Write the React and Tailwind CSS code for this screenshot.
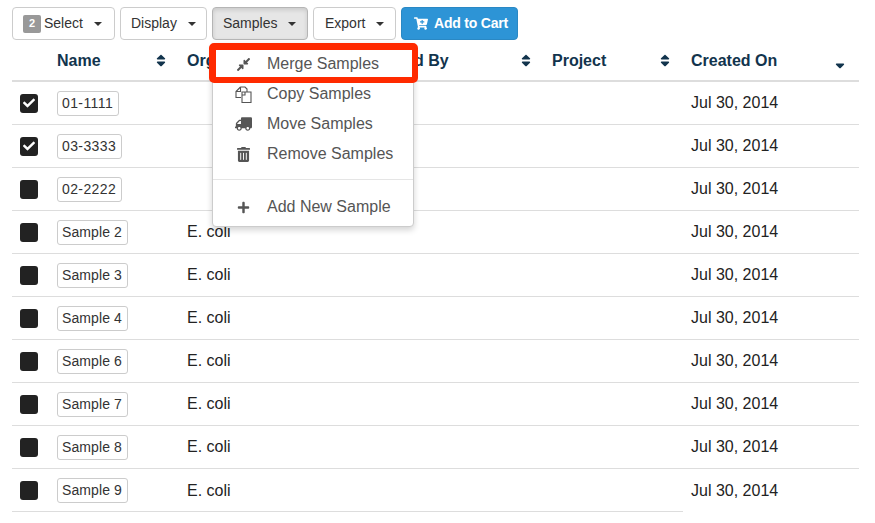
import React from "react";
import { FaCartPlus, FaCheck, FaCompressAlt, FaPlus, FaSort, FaSortDown, FaTruck, FaTrashAlt } from "react-icons/fa";

function Caret() {
  return <span className="ml-[11px] inline-block h-0 w-0 border-x-[4px] border-t-[4px] border-x-transparent border-t-[#333]" />;
}

function ToolButton({ children, className = "" }) {
  return (
    <button className={`flex h-[33px] items-center rounded-[4px] border text-[14px] text-[#333] ${className}`}>
      {children}
    </button>
  );
}

function Head({ w, children, sort = true, down = false, pr = "pr-[21px]" }) {
  return (
    <div className={`flex items-center justify-between ${pr} ${w}`}>
      <span className="text-[16px] font-bold text-[#12344d]">{children}</span>
      {sort && (down ? <FaSortDown className="mt-[3px] h-[15px] w-[10px] text-[#12344d]" /> : <FaSort className="h-[15px] w-[10px] text-[#12344d]" />)}
    </div>
  );
}

function Row({ name, org, checked, last, numeric }) {
  return (
    <div className={`flex h-[43px] items-center ${last ? "relative" : "border-b border-[#ddd]"}`}>
      <div className="w-[45px] pl-[8px]">
        <div className="flex h-[19px] w-[18px] items-center justify-center rounded-[3px] bg-[#222]">
          {checked && <FaCheck className="h-[12px] w-[12px] text-white" />}
        </div>
      </div>
      <div className="w-[130px]">
        <span className={`inline-block h-[25px] rounded-[3px] border border-[#ccc] pl-[4px] pr-[5px] text-[14px] leading-[23px] text-[#333] ${numeric ? "tracking-[0.4px]" : "tracking-[0.1px]"}`}>{name}</span>
      </div>
      <div className="w-[504px] text-[16px] text-[#222]">{org}</div>
      <div className="text-[16px] text-[#222]">Jul 30, 2014</div>
      {last && <div className="absolute bottom-0 left-0 h-px w-[671px] bg-[#ddd]" />}
    </div>
  );
}

const rows = [
  ["01-1111", "", true, true],
  ["03-3333", "", true, true],
  ["02-2222", "", false, true],
  ["Sample 2", "E. coli", false],
  ["Sample 3", "E. coli", false],
  ["Sample 4", "E. coli", false],
  ["Sample 6", "E. coli", false],
  ["Sample 7", "E. coli", false],
  ["Sample 8", "E. coli", false],
  ["Sample 9", "E. coli", false],
];

function CopyIcon() {
  return (
    <svg width="17" height="17" viewBox="0 0 17 17" fill="none" stroke="#555" strokeWidth="1.1">
      <path d="M5.5 1h4.5l2 2v3M5.5 1L1 5.5v6h5" />
      <path d="M1 5.5h4.5V1" />
      <path d="M7 6h9v10.5H7z" />
      <path d="M10 6v3H7" />
    </svg>
  );
}

function MenuItem({ icon, children }) {
  return (
    <div className="flex h-[30px] items-center text-[16px] text-[#555]">
      <span className="flex w-[54px] justify-center pl-[6px]">{icon}</span>
      <span>{children}</span>
    </div>
  );
}

export default function App() {
  return (
    <div className="relative h-[523px] w-[875px] overflow-hidden bg-white pl-[12px] pr-[16px] pt-[7px]" style={{ fontFamily: '"Liberation Sans", Arial, sans-serif' }}>
      <div className="flex gap-[5px]">
        <ToolButton className="w-[103px] border-[#ccc] bg-white pl-[10px]">
          <span className="mr-[3px] flex h-[18px] w-[18px] items-center justify-center rounded-[2px] bg-[#999] text-[11px] font-bold text-white">2</span>
          Select
          <Caret />
        </ToolButton>
        <ToolButton className="w-[87px] border-[#ccc] bg-white pl-[10px]">Display<Caret /></ToolButton>
        <ToolButton className="w-[96px] border-[#b5b5b5] bg-[#e6e6e6] pl-[10px] shadow-[inset_0_2px_4px_rgba(0,0,0,0.125)]">Samples<Caret /></ToolButton>
        <ToolButton className="w-[83px] border-[#ccc] bg-white pl-[11px]">Export<Caret /></ToolButton>
        <button className="flex h-[33px] w-[117px] items-center justify-center gap-[6px] rounded-[4px] border border-[#2a88c4] bg-[#2d94d6] pl-[3px] text-[14px] font-bold tracking-[-0.2px] text-white">
          <FaCartPlus className="h-[13px] w-[14px]" />
          Add to Cart
        </button>
      </div>

      <div className="mt-[1px]">
        <div className="flex h-[41px] items-center border-b-2 border-[#ddd]">
          <div className="w-[45px]" />
          <Head w="w-[130px]">Name</Head>
          <Head w="w-[187px]" sort={false}>Organism</Head>
          <Head w="w-[178px]">Added By</Head>
          <Head w="w-[139px]">Project</Head>
          <Head w="w-[168px]" down pr="pr-[14px]">Created On</Head>
        </div>
        {rows.map((r, i) => (
          <Row key={r[0]} name={r[0]} org={r[1]} checked={r[2]} numeric={r[3]} last={i === rows.length - 1} />
        ))}
      </div>

      <div className="absolute left-[212px] top-[43px] w-[202px] rounded-[4px] border border-[#ccc] bg-white pb-[4px] pt-[5px] shadow-[0_3px_6px_rgba(0,0,0,0.175)]">
        <MenuItem icon={<FaCompressAlt className="h-[15px] w-[15px] text-[#555]" />}>Merge Samples</MenuItem>
        <MenuItem icon={<CopyIcon />}>Copy Samples</MenuItem>
        <MenuItem icon={<FaTruck className="h-[14px] w-[17px] -scale-x-100 text-[#555]" />}>Move Samples</MenuItem>
        <MenuItem icon={<FaTrashAlt className="h-[15px] w-[13px] text-[#555]" />}>Remove Samples</MenuItem>
        <div className="mb-[12px] mt-[10px] h-px bg-[#e5e5e5]" />
        <MenuItem icon={<FaPlus className="h-[13px] w-[13px] text-[#555]" />}>Add New Sample</MenuItem>
      </div>
      <div className="absolute left-[209px] top-[43px] h-[40px] w-[209px] rounded-[5px] border-[6px] border-t-[7px] border-l-[7px] border-[#ff2a00]" />
    </div>
  );
}
